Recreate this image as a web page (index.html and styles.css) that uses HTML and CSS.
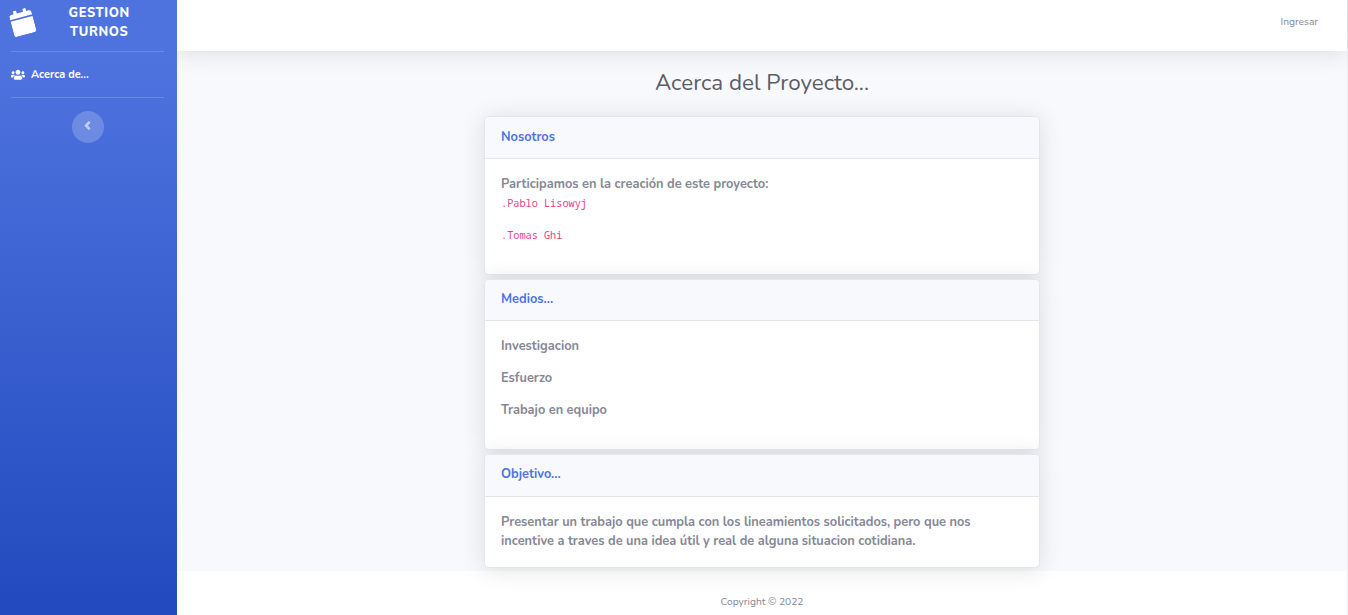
FILE: index.html
```html
<!DOCTYPE html>
<html lang="es">
<head>
<meta charset="utf-8">
<title>Gestion Turnos</title>
<link rel="stylesheet" href="styles.css">
</head>
<body>
<div class="wrapper">
  <nav class="sidebar">
    <a class="brand">
      <svg class="brand-icon" viewBox="0 0 448 512" fill="currentColor"><path d="M0 464c0 26.500 21.500 48 48 48h352c26.500 0 48-21.500 48-48V192H0v272zM448 112c0-26.500-21.500-48-48-48h-48V16c0-8.800-7.200-16-16-16h-32c-8.800 0-16 7.200-16 16v48H160V16c0-8.800-7.200-16-16-16h-32c-8.800 0-16 7.200-16 16v48H48C21.500 64 0 85.500 0 112v48h448z"/></svg>
      <span class="brand-text">GESTION<br>TURNOS</span>
    </a>
    <hr class="divider">
    <a class="nav-link">
      <svg class="nav-icon" viewBox="0 0 640 512" fill="currentColor"><path d="M96 224c35.300 0 64-28.700 64-64s-28.700-64-64-64-64 28.700-64 64 28.700 64 64 64zm448 0c35.300 0 64-28.700 64-64s-28.700-64-64-64-64 28.700-64 64 28.700 64 64 64zm32 32h-64c-17.600 0-33.500 7.100-45.100 18.600 40.300 22.100 68.900 62 75.100 109.400h66c17.700 0 32-14.300 32-32v-32c0-35.300-28.700-64-64-64zm-256 0c61.900 0 112-50.100 112-112S381.900 32 320 32 208 82.100 208 144s50.100 112 112 112zm76.800 32h-8.300c-20.800 10-43.900 16-68.500 16s-47.600-6-68.500-16h-8.300C179.600 288 128 339.600 128 403.200V432c0 26.500 21.500 48 48 48h288c26.500 0 48-21.500 48-48v-28.800c0-63.600-51.600-115.200-115.200-115.200zm-223.700-13.400C161.500 263.100 145.600 256 128 256H64c-35.300 0-64 28.700-64 64v32c0 17.700 14.300 32 32 32h65.900c6.300-47.400 34.900-87.300 75.200-109.400z"/></svg>
      <span>Acerca de...</span>
    </a>
    <hr class="divider">
    <button class="toggle" aria-label="Contraer">
      <svg class="toggle-icon" viewBox="0 0 256 512" fill="currentColor" stroke="currentColor" stroke-width="24"><path d="M31.700 239l136-136c9.400-9.400 24.600-9.400 33.900 0l22.600 22.600c9.400 9.400 9.400 24.600 0 33.900L127.900 256l96.400 96.400c9.400 9.400 9.400 24.600 0 33.900L201.700 409c-9.400 9.400-24.600 9.400-33.900 0l-136-136c-9.500-9.400-9.500-24.600-.1-34z"/></svg>
    </button>
  </nav>
  <div class="page">
    <header class="topbar"><a class="login">Ingresar</a></header>
    <main class="content">
      <h1 class="title">Acerca del Proyecto...</h1>
      <section class="card card-about">
        <h6 class="card-header">Nosotros</h6>
        <div class="card-body">
          <p class="lead">Participamos en la creación de este proyecto:</p>
          <code class="name">.Pablo Lisowyj</code>
          <code class="name">.Tomas Ghi</code>
        </div>
      </section>
      <section class="card card-means">
        <h6 class="card-header">Medios...</h6>
        <div class="card-body">
          <p class="item">Investigacion</p>
          <p class="item">Esfuerzo</p>
          <p class="item">Trabajo en equipo</p>
        </div>
      </section>
      <section class="card card-goal">
        <h6 class="card-header">Objetivo...</h6>
        <div class="card-body">
          <p class="goal">Presentar un trabajo que cumpla con los lineamientos solicitados, pero que nos incentive a traves de una idea útil y real de alguna situacion cotidiana.</p>
        </div>
      </section>
    </main>
    <footer class="footer"><span>Copyright © 2022</span></footer>
  </div>
</div>
</body>
</html>
```
FILE: styles.css
```css
* { box-sizing: border-box; }
body {
  margin: 0;
  font: 400 12.8px/19.2px Nunito, Lato, sans-serif;
  color: #858796;
  overflow: hidden;
}
.wrapper { display: flex; height: 615px; }
.sidebar {
  width: 177px;
  flex: none;
  display: flex;
  flex-direction: column;
  position: relative;
  z-index: 1;
  color: #fff;
  background: linear-gradient(180deg, #4e73df 10%, #224abe 100%);
}
.brand { display: flex; height: 51px; padding: 4px 0 0 11px; }
.brand-icon { width: 22.8px; height: 26px; margin: 5px 0 0 -0.4px; transform: rotate(-15deg); }
.brand-text { flex: 1; text-align: center; padding-right: 12px; font-size: 12.8px; font-weight: 800; line-height: 19px; letter-spacing: .64px; }
.divider { width: 153px; height: 1px; margin: 0 0 0 11px; border: 0; background: rgba(255,255,255,.16); }
.nav-link { display: flex; align-items: center; gap: 6px; height: 45px; padding-left: 11px; font-size: 10.88px; font-weight: 700; }
.nav-icon { width: 14px; height: 11.5px; }
.toggle {
  width: 32px; height: 32px; margin: 13px 0 0 72px; padding: 0 1px 4px 0;
  display: flex; align-items: center; justify-content: center;
  border: 0; border-radius: 50%; color: rgba(255,255,255,.55); background: rgba(255,255,255,.2);
}
.toggle-icon { width: 7px; height: 13px; }
.page { flex: 1; display: flex; flex-direction: column; background: #f8f9fc; border-right: 1px solid #eeeff3; }
.topbar {
  height: 51px; flex: none; display: flex; justify-content: flex-end;
  padding: 13px 29px 0 0; background: #fff;
  box-shadow: 0 2px 22px rgba(58,59,69,.15);
}
.login { font-size: 10.24px; }
.content { height: 520px; flex: none; display: flex; flex-direction: column; align-items: center; position: relative; }
.title { margin: 18px 0 20px; font-size: 22.4px; line-height: 27px; font-weight: 400; color: #5a5c69; }
.card {
  width: 556px; flex: none; margin-bottom: 4px;
  background: #fff; border: 1px solid #e3e6f0; border-radius: 4.5px;
  box-shadow: 0 2px 22px rgba(58,59,69,.15);
}
.card-about { height: 159px; }
.card-means { height: 171px; }
.card-goal { height: 114px; margin-bottom: 0; }
.card-header {
  height: 42px; margin: 0; padding: 12px 16px 0; font-size: 12.8px; line-height: 16px; font-weight: 700;
  color: #4e73df; background: #f8f9fc; border-bottom: 1px solid #e3e6f0; border-radius: 4px 4px 0 0;
}
.card-means .card-header { height: 41px; padding-top: 11px; }
.card-goal .card-header { padding-top: 11px; }
.card-body { padding: 16px; font-weight: 700; }
.lead, .item, .goal { margin: 0; }
.item { margin-bottom: 12.8px; }
.name { display: block; margin-bottom: 13px; font: 400 10.24px/19px "Noto Sans Mono", "DejaVu Sans Mono", monospace; color: #e83e8c; }
.footer { flex: 1; display: flex; justify-content: center; padding-top: 22px; background: #fff; font-size: 10.24px; }
```
